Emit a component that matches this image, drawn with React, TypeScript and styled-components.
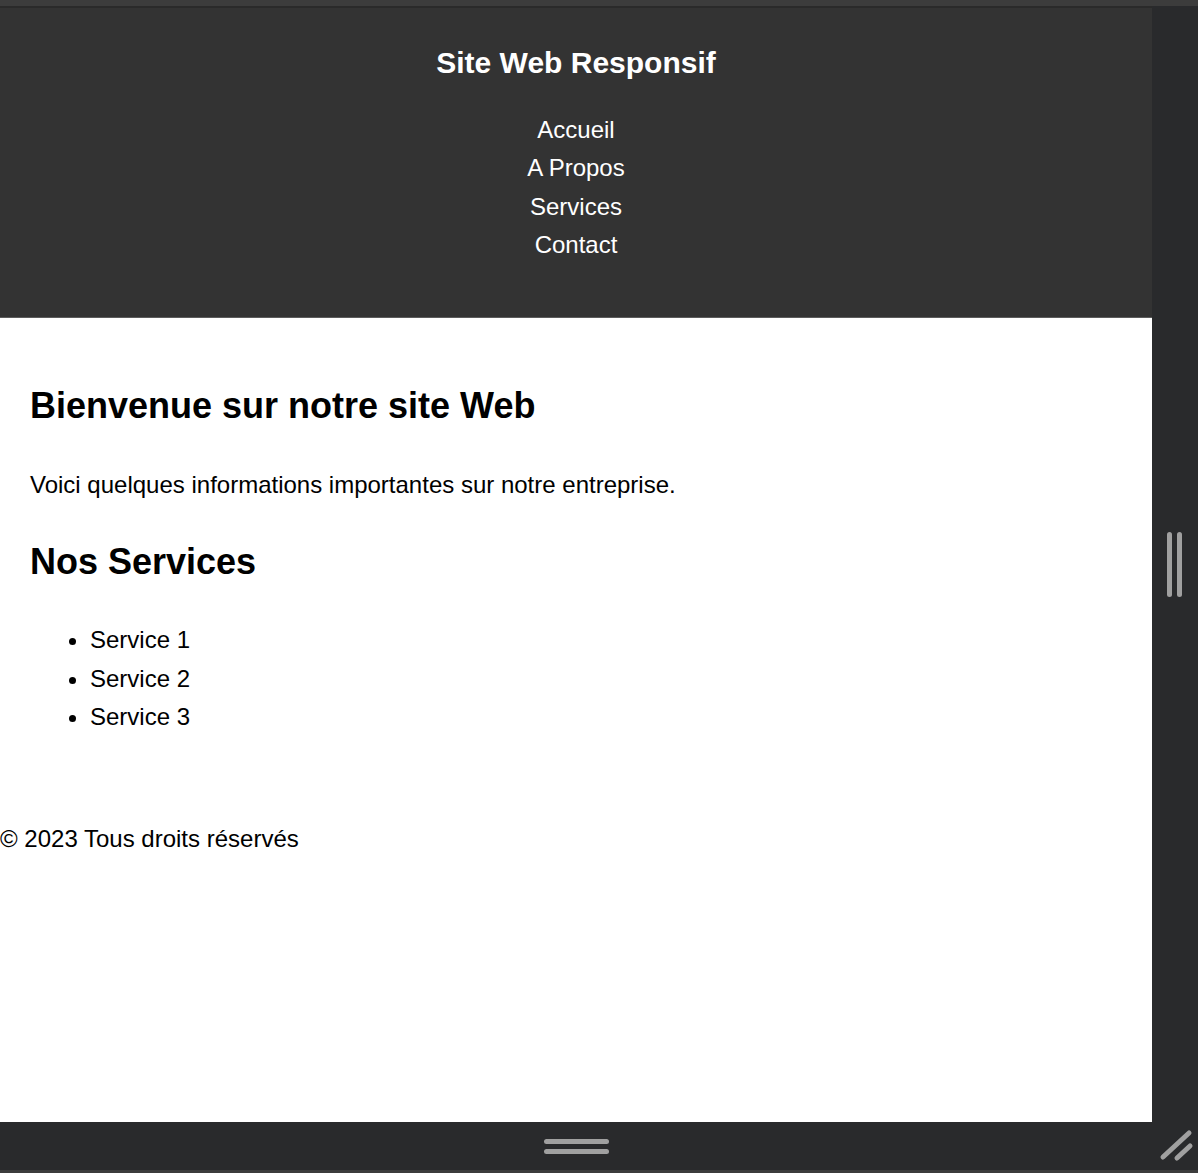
import React from 'react';
import styled, { createGlobalStyle } from 'styled-components';

const GlobalStyle = createGlobalStyle`
  html, body {
    margin: 0;
    padding: 0;
    background-color: #292a2c;
  }
  body {
    font-family: 'Liberation Sans', Arial, sans-serif;
  }
`;

const StyledFrame = styled.div`
  display: flex;
  flex-direction: column;
  width: 1198px;
  height: 1173px;
  overflow: hidden;
`;

const StyledTopStrip = styled.div`
  height: 6px;
  background-color: #3c3c3c;
`;

const StyledMiddle = styled.div`
  display: flex;
  height: 1116px;
`;

const StyledViewport = styled.div`
  width: 1152px;
  display: flex;
  flex-direction: column;
  background-color: #ffffff;
  border-top: 2px solid #2a2a2a;
  box-sizing: border-box;
  overflow: hidden;
  line-height: 1.6;
  color: #000000;
`;

const StyledSidePanel = styled.div`
  flex: 1;
  display: flex;
  align-items: center;
  justify-content: center;
  gap: 5px;
  background-color: #292a2c;
  padding-right: 2px;
`;

const StyledVerticalGrip = styled.span`
  width: 5px;
  height: 65px;
  border-radius: 3px;
  background-color: #a0a0a0;
`;

const StyledBottomBar = styled.div`
  position: relative;
  height: 48px;
  display: flex;
  flex-direction: column;
  align-items: center;
  justify-content: center;
  gap: 5px;
  background-color: #292a2c;
  border-bottom: 3px solid #3c3c3c;
  padding-right: 46px;
`;

const StyledHorizontalGrip = styled.span`
  width: 65px;
  height: 5px;
  border-radius: 3px;
  background-color: #a0a0a0;
`;

const StyledResizeCorner = styled.svg`
  position: absolute;
  right: 4px;
  bottom: 8px;
`;

const StyledHeader = styled.header`
  background-color: #333333;
  color: #ffffff;
  text-align: center;
  padding: 31px 0 52px;
  border-bottom: 1px solid #5c5c5c;
`;

const StyledTitle = styled.h1`
  margin: 0;
  font-size: 30px;
  line-height: 48px;
  font-weight: bold;
`;

const StyledNavList = styled.ul`
  list-style: none;
  margin: 24px 0 0;
  padding: 0;
`;

const StyledNavListItem = styled.li`
  font-size: 24px;
  line-height: 38.4px;
`;

const StyledNavLink = styled.a`
  color: #ffffff;
  text-decoration: none;
`;

const StyledMain = styled.main`
  padding: 0 30px;
`;

const StyledHeading = styled.h2<{ $top: number }>`
  margin: ${(p) => p.$top}px 0 0;
  font-size: 36px;
  line-height: 57.6px;
  font-weight: bold;
`;

const StyledParagraph = styled.p`
  margin: 32px 0 0;
  font-size: 24px;
  line-height: 38.4px;
`;

const StyledServiceList = styled.ul`
  margin: 31px 0 0;
  padding-left: 60px;
`;

const StyledServiceItem = styled.li`
  font-size: 24px;
  line-height: 38.4px;
`;

const StyledFooter = styled.footer`
  margin-top: 84px;
  font-size: 24px;
  line-height: 38.4px;
`;

const navItems = ['Accueil', 'A Propos', 'Services', 'Contact'];
const services = ['Service 1', 'Service 2', 'Service 3'];

const App: React.FunctionComponent = () => (
  <>
    <GlobalStyle />
    <StyledFrame>
      <StyledTopStrip />
      <StyledMiddle>
        <StyledViewport>
          <StyledHeader>
            <StyledTitle>Site Web Responsif</StyledTitle>
            <nav>
              <StyledNavList>
                {navItems.map((item) => (
                  <StyledNavListItem key={item}>
                    <StyledNavLink href="#">{item}</StyledNavLink>
                  </StyledNavListItem>
                ))}
              </StyledNavList>
            </nav>
          </StyledHeader>
          <StyledMain>
            <StyledHeading $top={59}>Bienvenue sur notre site Web</StyledHeading>
            <StyledParagraph>
              Voici quelques informations importantes sur notre entreprise.
            </StyledParagraph>
            <StyledHeading $top={28}>Nos Services</StyledHeading>
            <StyledServiceList>
              {services.map((service) => (
                <StyledServiceItem key={service}>{service}</StyledServiceItem>
              ))}
            </StyledServiceList>
          </StyledMain>
          <StyledFooter>© 2023 Tous droits réservés</StyledFooter>
        </StyledViewport>
        <StyledSidePanel>
          <StyledVerticalGrip />
          <StyledVerticalGrip />
        </StyledSidePanel>
      </StyledMiddle>
      <StyledBottomBar>
        <StyledHorizontalGrip />
        <StyledHorizontalGrip />
        <StyledResizeCorner width="36" height="36" viewBox="0 0 36 36">
          <line x1="5" y1="31" x2="31" y2="7" stroke="#a0a0a0" strokeWidth="5" strokeLinecap="round" />
          <line x1="19" y1="32" x2="32" y2="20" stroke="#a0a0a0" strokeWidth="5" strokeLinecap="round" />
        </StyledResizeCorner>
      </StyledBottomBar>
    </StyledFrame>
  </>
);

export default App;
